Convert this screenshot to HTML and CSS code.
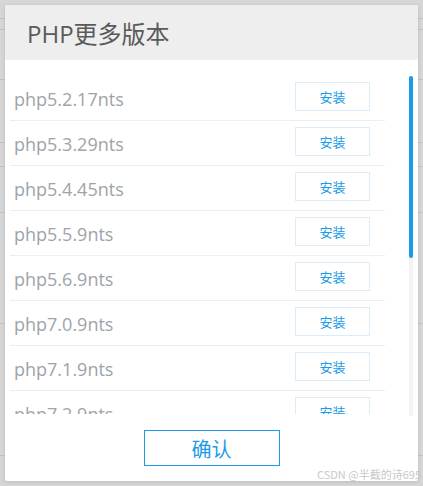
FILE: index.html
```html
<!DOCTYPE html>
<html lang="zh-CN">
<head>
    <meta charset="UTF-8">
    <meta name="viewport" content="width=device-width, initial-scale=1.0">
    <title>PHP更多版本</title>
    <link rel="stylesheet" href="styles.css">
</head>
<body>
    <div class="backdrop">
        <div class="dialog">
            <div class="dialog-header">PHP更多版本</div>

            <div class="dialog-body">
                <div class="version-list">
                    <div class="version-row">
                        <div class="version-name">php5.2.17nts</div>
                        <button class="install-btn">安装</button>
                    </div>
                    <div class="version-row">
                        <div class="version-name">php5.3.29nts</div>
                        <button class="install-btn">安装</button>
                    </div>
                    <div class="version-row">
                        <div class="version-name">php5.4.45nts</div>
                        <button class="install-btn">安装</button>
                    </div>
                    <div class="version-row">
                        <div class="version-name">php5.5.9nts</div>
                        <button class="install-btn">安装</button>
                    </div>
                    <div class="version-row">
                        <div class="version-name">php5.6.9nts</div>
                        <button class="install-btn">安装</button>
                    </div>
                    <div class="version-row">
                        <div class="version-name">php7.0.9nts</div>
                        <button class="install-btn">安装</button>
                    </div>
                    <div class="version-row">
                        <div class="version-name">php7.1.9nts</div>
                        <button class="install-btn">安装</button>
                    </div>
                    <div class="version-row">
                        <div class="version-name">php7.2.9nts</div>
                        <button class="install-btn">安装</button>
                    </div>
                </div>

                <div class="scroll-track">
                    <div class="scroll-thumb"></div>
                </div>
            </div>

            <div class="dialog-footer">
                <button class="confirm-btn">确认</button>
            </div>
        </div>
    </div>

    <div class="watermark">CSDN @半截的诗695</div>
</body>
</html>
```

FILE: styles.css
```css
:root {
    --page-bg: #d6d6d6;
    --line-color: #c3c3c3;
    --primary-color: #1a9be8;
    --title-color: #5a5a5a;
    --text-color: #9ea4aa;
    --row-border: #eeeeee;
}

body {
    margin: 0;
    font-family: 'Open Sans', 'Noto Sans CJK SC', sans-serif;
    background-color: var(--page-bg);
    /* linhas da pagina que fica por tras do dialogo */
    background-image:
        linear-gradient(to bottom,
            transparent 18px, var(--line-color) 18px, var(--line-color) 19px, transparent 19px,
            transparent 29px, var(--line-color) 29px, var(--line-color) 30px, transparent 30px,
            transparent 79px, var(--line-color) 79px, var(--line-color) 80px, transparent 80px,
            transparent 142px, var(--line-color) 142px, var(--line-color) 143px, transparent 143px,
            transparent 166px, var(--line-color) 166px, var(--line-color) 167px, transparent 167px,
            transparent 212px, var(--line-color) 212px, var(--line-color) 213px, transparent 213px,
            transparent 323px, var(--line-color) 323px, var(--line-color) 324px, transparent 324px,
            transparent 455px, var(--line-color) 455px, var(--line-color) 456px, transparent 456px);
    min-height: 486px;
}

.backdrop {
    padding: 5px;
}

.dialog {
    width: 413px;
    height: 476px;
    background-color: #ffffff;
    border-radius: 2px;
    box-shadow: 0 1px 4px rgba(0, 0, 0, 0.12);
    display: flex;
    flex-direction: column;
    overflow: hidden;
}

.dialog-header {
    height: 55px;
    flex-shrink: 0;
    box-sizing: border-box;
    padding: 3px 0 0 22px;
    background-color: #eeeeee;
    border-radius: 0 0 3px 0;
    color: var(--title-color);
    font-size: 24px;
    line-height: 52px;
}

.dialog-body {
    height: 354px;
    flex-shrink: 0;
    display: flex;
}

.version-list {
    width: 375px;
    margin-left: 5px;
    padding-top: 16px;
    overflow: hidden;
}

.version-row {
    height: 44px;
    display: flex;
    align-items: center;
    justify-content: space-between;
    border-bottom: 1px solid var(--row-border);
}

.version-name {
    padding-left: 4px;
    padding-top: 2px;
    color: var(--text-color);
    font-size: 18px;
}

.install-btn {
    width: 75px;
    height: 29px;
    margin: 0 15px 3px 0;
    padding: 0;
    background-color: #ffffff;
    border: 1px solid #dcedf9;
    color: var(--primary-color);
    font-family: 'Noto Sans CJK SC', sans-serif;
    font-size: 13px;
    cursor: pointer;
}

.scroll-track {
    width: 4px;
    margin: 16px 0 0 24px;
    height: 340px;
    background-color: #f3f3f3;
}

.scroll-thumb {
    height: 182px;
    background-color: var(--primary-color);
    border-radius: 2px;
}

.dialog-footer {
    flex: 1;
    display: flex;
    justify-content: center;
    padding-top: 16px;
}

.confirm-btn {
    width: 136px;
    height: 36px;
    padding: 0;
    background-color: #ffffff;
    border: 1px solid var(--primary-color);
    color: var(--primary-color);
    font-family: 'Noto Sans CJK SC', sans-serif;
    font-size: 20px;
    cursor: pointer;
}

/* marca d'agua sobre o canto */
.watermark {
    position: absolute;
    right: 2px;
    top: 466px;
    color: #c9c9c9;
    font-family: 'Noto Sans CJK SC', sans-serif;
    font-size: 11px;
}
```
